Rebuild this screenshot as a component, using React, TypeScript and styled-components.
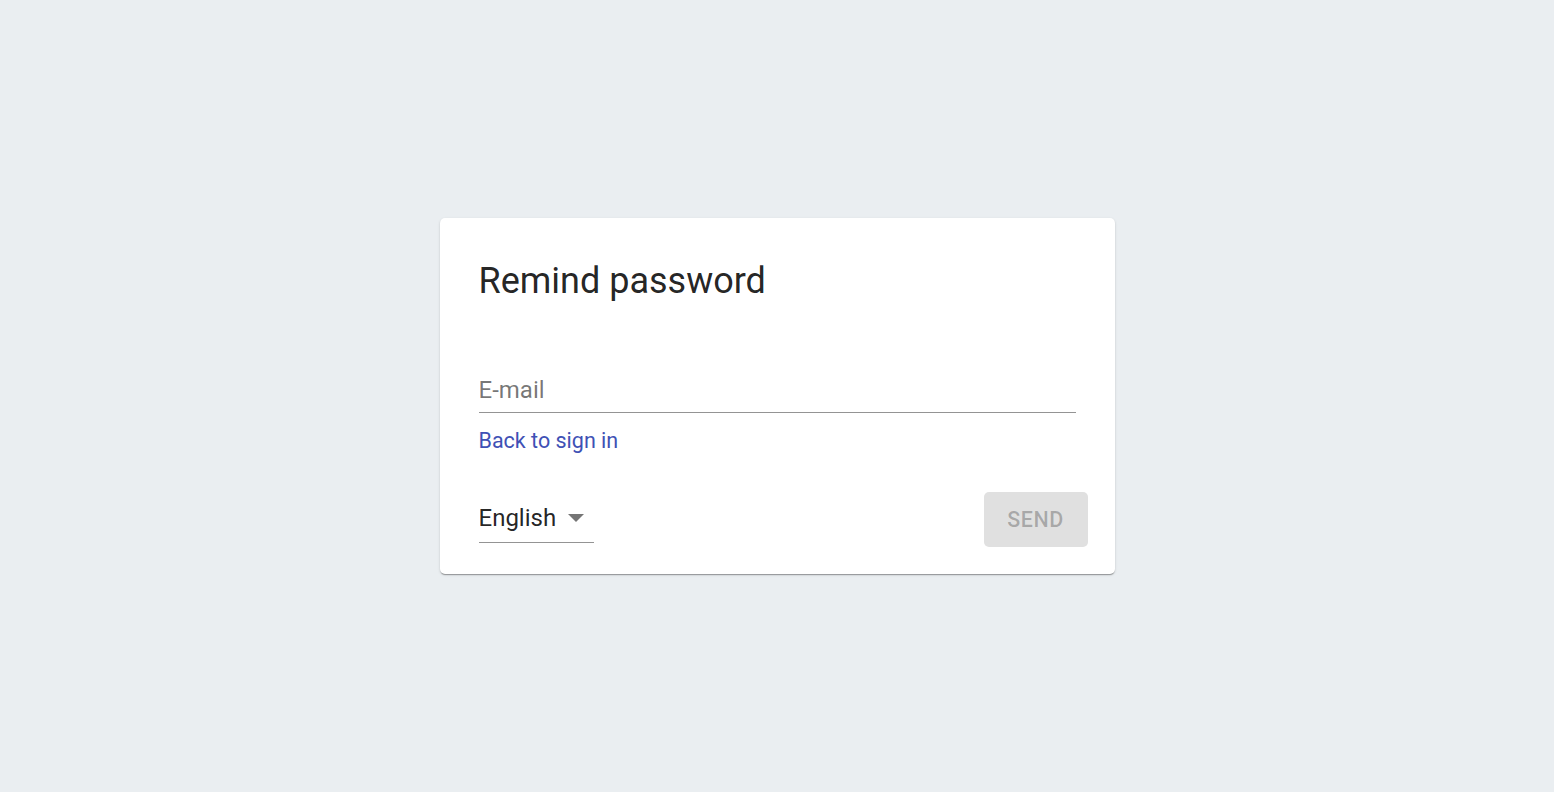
import React from 'react';
import styled, { createGlobalStyle } from 'styled-components';

const GlobalStyle = createGlobalStyle`
  html, body {
    margin: 0;
    padding: 0;
    height: 100%;
  }
  body {
    background: #eaeef1;
    font-family: Roboto, "Liberation Sans", sans-serif;
  }
  #root {
    height: 100%;
  }
`;

const Page = styled.div`
  min-height: 100vh;
  display: flex;
  align-items: center;
  justify-content: center;
`;

const Card = styled.div`
  width: 675px;
  background: #ffffff;
  border-radius: 5px;
  box-shadow: 0 2px 1px -1px rgba(0,0,0,0.2), 0 1px 1px 0 rgba(0,0,0,0.14), 0 1px 3px 0 rgba(0,0,0,0.12);
`;

const Content = styled.div`
  padding: 41px 39px 0 39px;
  display: flex;
  flex-direction: column;
`;

const Title = styled.h1`
  margin: 0;
  font-size: 36px;
  line-height: 44px;
  font-weight: 400;
  color: rgba(0, 0, 0, 0.87);
  letter-spacing: 0;
`;

const Field = styled.label`
  display: block;
  margin-top: 72px;
  border-bottom: 1px solid rgba(0, 0, 0, 0.42);
  padding-bottom: 7px;
`;

const Input = styled.input`
  display: block;
  width: 100%;
  border: none;
  outline: none;
  padding: 0;
  font-family: inherit;
  font-size: 24px;
  line-height: 30px;
  color: rgba(0, 0, 0, 0.87);
  background: transparent;

  &::placeholder {
    color: rgba(0, 0, 0, 0.54);
    opacity: 1;
  }
`;

const BackLink = styled.a`
  margin-top: 15px;
  align-self: flex-start;
  font-size: 21.5px;
  line-height: 26px;
  color: #3f51b5;
  text-decoration: none;
`;

const Actions = styled.div`
  display: flex;
  align-items: flex-end;
  justify-content: space-between;
  padding: 38px 27px 27px 39px;
`;

const Select = styled.div`
  display: flex;
  align-items: center;
  width: 115px;
  margin-bottom: 4px;
  padding: 6px 0 10px;
  border-bottom: 1px solid rgba(0, 0, 0, 0.42);
  font-size: 24px;
  line-height: 28px;
  color: rgba(0, 0, 0, 0.87);
`;

const SelectValue = styled.span`
  flex: 1;
`;

const SendButton = styled.button`
  width: 104px;
  height: 55px;
  border: none;
  border-radius: 5px;
  background: #e0e0e0;
  color: rgba(0, 0, 0, 0.26);
  font-family: inherit;
  font-size: 21.5px;
  font-weight: 500;
  letter-spacing: 0.5px;
  text-transform: uppercase;
`;

const ArrowDown = () => (
  <svg width="16" height="8" viewBox="0 0 16 8" style={{ marginRight: 10 }}>
    <path d="M0 0h16L8 8z" fill="rgba(0,0,0,0.54)" />
  </svg>
);

export default function App() {
  return (
    <>
      <GlobalStyle />
      <Page>
        <Card>
          <Content>
            <Title>Remind password</Title>
            <Field>
              <Input type="email" placeholder="E-mail" />
            </Field>
            <BackLink href="#">Back to sign in</BackLink>
          </Content>
          <Actions>
            <Select>
              <SelectValue>English</SelectValue>
              <ArrowDown />
            </Select>
            <SendButton disabled>Send</SendButton>
          </Actions>
        </Card>
      </Page>
    </>
  );
}
